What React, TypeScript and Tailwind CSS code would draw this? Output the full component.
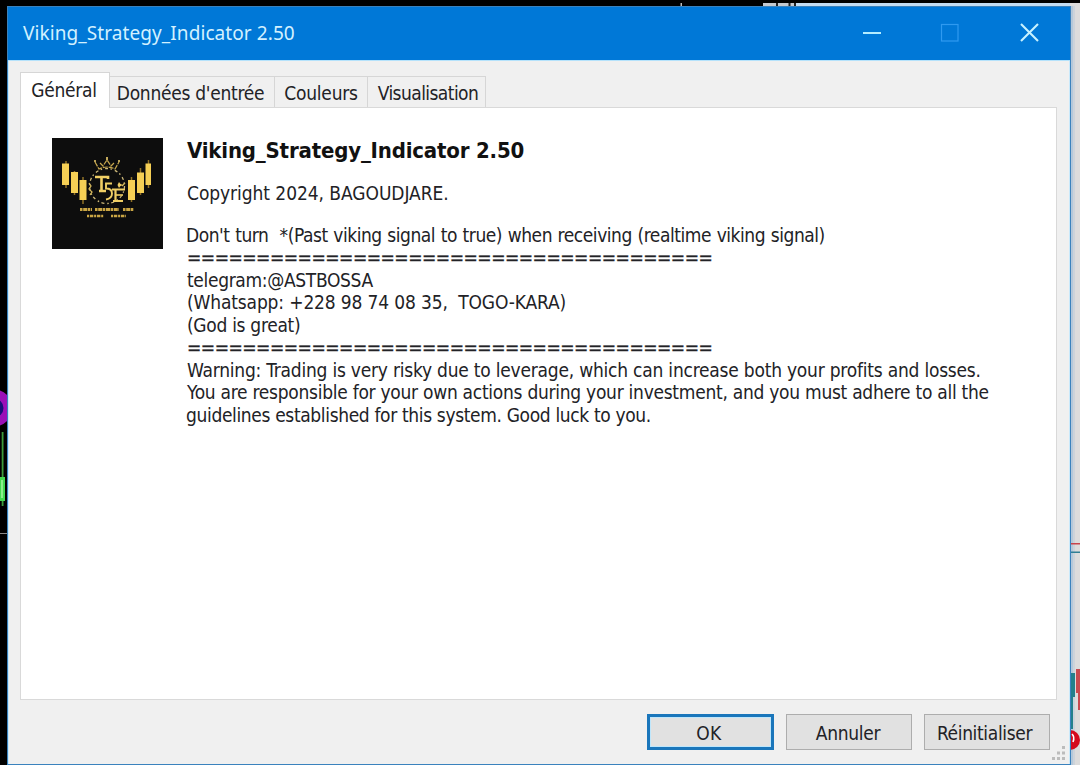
import type { ReactNode } from "react";

function Chart() {
  return (
    <svg className="absolute inset-0" width="1080" height="765" viewBox="0 0 1080 765">
      <rect width="1080" height="765" fill="#000" />
      <rect x="680.500" y="3" width="1.500" height="4" fill="#bbb" />
      <rect x="763" y="3" width="33" height="4" fill="#c4c9cf" />
      <rect x="796" y="3" width="284" height="4" fill="#c4ddf2" />
      <path d="M777 3v4M789.500 3v4M795 3v4" stroke="#222" strokeWidth="2" />
      <rect x="1070" y="3" width="10" height="762" fill="#dcdcdc" />
      <rect x="1071" y="6" width="2" height="759" fill="#b4c8da" />
      <rect x="1073" y="6" width="2" height="759" fill="#ccd3da" />
      <circle cx="-6" cy="408" r="14" fill="#16107a" stroke="#9a10b8" strokeWidth="9" />
      <rect x="1.700" y="432" width="1.800" height="74" fill="#3c9c3c" />
      <rect x="0" y="477" width="5" height="24" fill="#43d84f" />
      <rect x="1" y="480" width="2" height="18" fill="#8cf08c" />
      <rect x="0" y="533" width="8" height="1" fill="#8a8a8a" />
      <rect x="1070" y="543" width="10" height="1.500" fill="#c8444c" />
      <rect x="1070" y="551.500" width="10" height="1.500" fill="#2f7f95" />
      <rect x="1071" y="673" width="4" height="24" fill="#23808c" />
      <rect x="1071" y="697" width="2" height="32" fill="#23808c" />
      <rect x="1076" y="669" width="4" height="24" fill="#c84a50" />
      <rect x="1078" y="693" width="2" height="17" fill="#c84a50" />
      <circle cx="1070" cy="740" r="10" fill="#d40a1c" />
      <path d="M1072 734q3 3 1 8" stroke="#fff" strokeWidth="1.600" fill="none" />
    </svg>
  );
}

function Logo() {
  return (
    <svg className="h-[111px] w-[111px] shrink-0" viewBox="0 0 111 111">
      <rect width="111" height="111" fill="#0d0d0d" />
      <g stroke="#8f7026" strokeWidth="1.500">
        <path d="M14 23v27M22.500 33v24M31 39v27M79.500 39v25M88.500 30v27M96.500 22v28" />
      </g>
      <g fill="#f5cf55">
        <rect x="10" y="25.500" width="7" height="21.500" />
        <rect x="19" y="34" width="7" height="21" />
        <rect x="27.500" y="42" width="7" height="20" />
        <rect x="76" y="42" width="7" height="20" />
        <rect x="85" y="34.500" width="7" height="20.500" />
        <rect x="93.500" y="25.500" width="5.500" height="21.500" />
      </g>
      <circle cx="55" cy="48" r="17.500" fill="none" stroke="#cdb878" strokeWidth="1.300" strokeDasharray="3 2.500 1.500 3" />
      <path d="M37 45l2 3-2 3 3 3-2 3M73 45l-3 3" fill="none" stroke="#d3b65c" strokeWidth="1.300" />
      <path d="M43 24l4 7q8-4 16 0l4-7M48 25l3 3 4-6 4 6 3-3" fill="none" stroke="#c9a94f" strokeWidth="1.200" strokeDasharray="5 1" />
      <path d="M55 19v3M42 23h2M66 23h2" stroke="#f0d070" strokeWidth="1.600" />
      <path d="M43 39h13v2M49.500 39v14M47 53h7" stroke="#f0cf65" strokeWidth="2.600" fill="none" />
      <path d="M60 45.500h-6v5q6 0 6 5t-6 6" stroke="#f0cf65" strokeWidth="1.900" fill="none" />
      <path d="M60 51.500h13M63.500 51v12M61 63h10" stroke="#f0cf65" strokeWidth="2.200" fill="none" />
      <path d="M64 57h7" stroke="#f0cf65" strokeWidth="1.600" />
      <path d="M67 44l1.500 2 2.500 1-2.500 1-1.500 2-1.500-3z" fill="#f0cf65" />
      <path d="M28 71.500h12M43 71.500h24M71 71.500h11" stroke="#c9a544" strokeWidth="2.800" strokeDasharray="2.500 .7 4 .6" />
      <path d="M35 78h17M59 78h15" stroke="#c9a544" strokeWidth="2.500" strokeDasharray="2 .8 3.500 .8" />
    </svg>
  );
}

function TitleBar() {
  return (
    <div className="flex h-[53px] shrink-0 items-center justify-between bg-[#0078d7] pl-[15px] pr-[30px]">
      <span className="font-['Noto_Sans',sans-serif] text-[19px] tracking-[0.080px] text-[#d3f1ff]">
        Viking_Strategy_Indicator 2.50
      </span>
      <svg className="-mt-px" width="178" height="20" viewBox="0 0 178 20" fill="none">
        <path d="M1 10h18" stroke="#b4ecff" strokeWidth="2" />
        <rect x="79.500" y="1.500" width="16.500" height="16.500" stroke="#2f9af0" strokeWidth="1.200" />
        <path d="M159 1l17 17M176 1l-17 17" stroke="#c8f2ff" strokeWidth="2.100" />
      </svg>
    </div>
  );
}

function Tab({ children, className }: { children: ReactNode; className: string }) {
  return (
    <div className={`flex h-[31px] items-center justify-center border-t border-r border-[#d6d6d6] bg-[#f0f0f0] pt-[2px] ${className}`}>
      {children}
    </div>
  );
}

function Button({ children, className }: { children: ReactNode; className: string }) {
  return (
    <button className={`flex h-9 items-center justify-center bg-[#e1e1e1] ${className}`}>
      {children}
    </button>
  );
}

function Rule() {
  return <p className="tracking-[-0.500px] [-webkit-text-stroke:0.300px_#222226]">{"=".repeat(38)}</p>;
}

function Grip() {
  return (
    <svg className="absolute right-[4px] bottom-[3px]" width="15" height="15" viewBox="0 0 15 15" fill="#bcbcbc">
      <rect x="11" y="0" width="3" height="3" />
      <rect x="6" y="5.500" width="3" height="3" />
      <rect x="11" y="5.500" width="3" height="3" />
      <rect x="1" y="11" width="3" height="3" />
      <rect x="6" y="11" width="3" height="3" />
      <rect x="11" y="11" width="3" height="3" />
    </svg>
  );
}

export default function App() {
  return (
    <div className="relative h-[765px] w-[1080px] overflow-hidden bg-black font-['DejaVu_Sans_Condensed','DejaVu_Sans',sans-serif] text-[19px] leading-[22.500px] text-[#222226]">
      <Chart />
      <div className="relative ml-[7px] mt-[6px] flex h-[759px] w-[1064px] flex-col border border-[#3a82bd] bg-[#f0f0f0]">
        <TitleBar />
        <div className="h-px shrink-0 bg-[#b5e2fb]" />
        <div className="flex flex-1 flex-col border-x border-[#c9e9fb] px-[11px] pt-[11px]">
          <div className="flex items-end">
            <div className="relative z-10 -mb-px flex h-[36px] w-[90px] items-center justify-center border-x border-t border-[#d6d6d6] bg-white pr-[2px] tracking-[-0.250px]">
              Général
            </div>
            <Tab className="w-[165px] pr-[3px] tracking-[-0.280px]">Données d'entrée</Tab>
            <Tab className="w-[93px] tracking-[-0.200px]">Couleurs</Tab>
            <Tab className="w-[118px] pl-[3px] tracking-[-0.560px]">Visualisation</Tab>
          </div>
          <div className="flex h-[593px] w-[1037px] gap-6 border border-[#d9d9d9] bg-white pl-[31px] pt-[30px]">
            <Logo />
            <div className="whitespace-pre">
              <h1 className="text-[22px] leading-[26px] font-bold tracking-[-0.180px] text-[#111]">Viking_Strategy_Indicator 2.50</h1>
              <p className="mt-[18px] tracking-[-0.060px]">Copyright 2024, BAGOUDJARE.</p>
              <div className="mt-[19px]">
                <p className="-ml-px tracking-[-0.450px] [word-spacing:0.600px]">Don't turn  *(Past viking signal to true) when receiving (realtime viking signal)</p>
                <Rule />
                <p className="tracking-[-0.340px]">telegram:@ASTBOSSA</p>
                <p className="tracking-[-0.150px]">(Whatsapp: +228 98 74 08 35,  TOGO-KARA)</p>
                <p className="tracking-[-0.300px]">(God is great)</p>
                <Rule />
                <p className="tracking-[-0.220px]">Warning: Trading is very risky due to leverage, which can increase both your profits and losses.</p>
                <p className="tracking-[-0.270px]">You are responsible for your own actions during your investment, and you must adhere to all the</p>
                <p className="-ml-px tracking-[-0.350px]">guidelines established for this system. Good luck to you.</p>
              </div>
            </div>
          </div>
          <div className="flex justify-end gap-3 pt-[14px] pr-[8px]">
            <Button className="w-[127px] border-[3px] border-[#1a76bb] pt-[2px] pr-[3px] tracking-[0.500px] inset-ring inset-ring-[#bfe6fb]">OK</Button>
            <Button className="w-[126px] border border-[#adadad] pt-[2px] pr-[2px] tracking-[-0.300px]">Annuler</Button>
            <Button className="w-[126px] border border-[#adadad] pt-[2px] pr-[5px] tracking-[-0.350px]">Réinitialiser</Button>
          </div>
        </div>
        <Grip />
      </div>
    </div>
  );
}
